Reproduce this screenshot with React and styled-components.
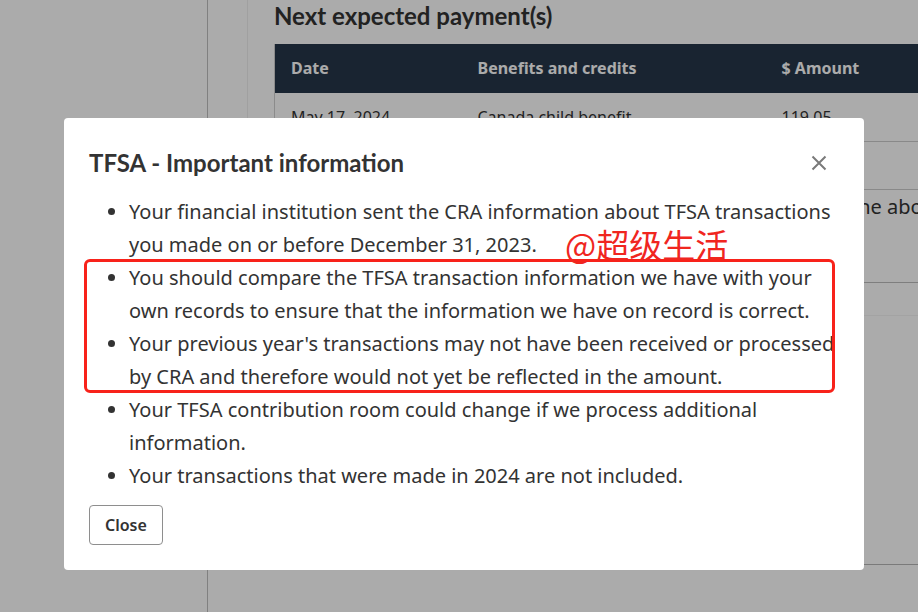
import React from "react";
import styled, { createGlobalStyle } from "styled-components";

const GlobalStyle = createGlobalStyle`
  html, body { margin: 0; padding: 0; }
  body {
    width: 918px;
    height: 612px;
    overflow: hidden;
    background: #ffffff;
    font-family: "Noto Sans", "Liberation Sans", sans-serif;
    color: #333333;
  }
  * { box-sizing: border-box; }
`;

const Page = styled.div`
  display: flex;
  height: 612px;
  width: 918px;
  overflow: hidden;
`;

const Sidebar = styled.aside`
  flex: 0 0 208px;
  border-right: 1px solid #bfbfbf;
`;

const Gutter = styled.div`
  flex: 0 0 39px;
`;

const Card = styled.main`
  flex: 0 0 auto;
  width: 760px;
  height: 565px;
  border-left: 1px solid #efefef;
  border-bottom: 1px solid #b6b6b6;
  padding: 2px 0 0 26px;
  overflow: hidden;
`;

const Heading = styled.h2`
  margin: 0;
  font-family: Lato, "Liberation Sans", sans-serif;
  font-weight: 700;
  font-size: 24px;
  line-height: 28px;
  color: #333333;
`;

const Table = styled.table`
  margin-top: 14px;
  width: 720px;
  border-collapse: collapse;
  font-size: 16px;
  border-left: 1px solid #cfcfcf;
`;

const HeadCell = styled.th`
  background: #26374a;
  color: #ffffff;
  font-weight: 700;
  text-align: left;
  height: 49px;
  padding: 0 16px 2px;
  width: ${(p) => p.$w || "auto"};
`;

const Cell = styled.td`
  height: 48px;
  padding: 0 16px;
  border-bottom: 1px solid #cdcdcd;
  color: #333333;
`;

const Note = styled.p`
  margin: 0;
  height: 93px;
  font-size: 20px;
  line-height: 33px;
  white-space: nowrap;
  border-bottom: 1px solid #bdbdbd;
  color: #333333;
`;

const NoteLead = styled.span`
  display: inline-block;
  width: 577px;
  overflow: hidden;
  vertical-align: top;
`;

const Strip = styled.div`
  height: 33px;
  border-bottom: 1px solid #f4f4f4;
`;

const Overlay = styled.div`
  position: fixed;
  inset: 0;
  background: rgba(0, 0, 0, 0.33);
  display: flex;
  align-items: flex-start;
  padding: 118px 0 0 64px;
`;

const Modal = styled.section`
  position: relative;
  width: 800px;
  background: #ffffff;
  border-radius: 4px;
  padding: 0 25px 25px;
`;

const ModalHeader = styled.header`
  display: flex;
  align-items: center;
  justify-content: space-between;
  padding-top: 30px;
`;

const ModalTitle = styled.h2`
  margin: 0;
  font-family: Lato, "Liberation Sans", sans-serif;
  font-weight: 700;
  font-size: 24px;
  line-height: 29px;
  color: #333333;
`;

const IconButton = styled.button`
  display: flex;
  align-items: center;
  justify-content: center;
  width: 24px;
  height: 24px;
  margin-right: 8px;
  padding: 0;
  border: 0;
  background: transparent;
  cursor: pointer;
`;

const List = styled.ul`
  margin: 18px 0 0;
  padding-left: 40px;
  font-size: 20px;
  line-height: 33px;
  color: #333333;
`;

const Item = styled.li``;

const Footer = styled.footer`
  display: flex;
  margin-top: 13px;
`;

const CloseButton = styled.button`
  height: 40px;
  padding: 0 15px;
  border: 1px solid #8e8e8e;
  border-radius: 4px;
  background: #ffffff;
  font-family: "Noto Sans", "Liberation Sans", sans-serif;
  font-weight: 600;
  font-size: 16px;
  color: #333333;
  cursor: pointer;
`;

const Highlight = styled.div`
  position: absolute;
  left: 20px;
  top: 141px;
  width: 751px;
  height: 134px;
  border: 3px solid #f8221a;
  border-radius: 6px;
  pointer-events: none;
`;

const Watermark = styled.span`
  position: absolute;
  left: 501px;
  top: 106px;
  font-family: "Noto Sans CJK SC", "Noto Sans", sans-serif;
  font-size: 33px;
  line-height: 40px;
  color: #f0261f;
  pointer-events: none;
`;

export default function App() {
  return (
    <>
      <GlobalStyle />
      <Page>
        <Sidebar />
        <Gutter />
        <Card>
          <Heading>Next expected payment(s)</Heading>
          <Table>
            <thead>
              <tr>
                <HeadCell $w="187px">Date</HeadCell>
                <HeadCell $w="304px">Benefits and credits</HeadCell>
                <HeadCell>$ Amount</HeadCell>
              </tr>
            </thead>
            <tbody>
              <tr>
                <Cell>May 17, 2024</Cell>
                <Cell>Canada child benefit</Cell>
                <Cell>119.05</Cell>
              </tr>
              <tr>
                <Cell>May 17, 2024</Cell>
                <Cell>Ontario child benefit</Cell>
                <Cell></Cell>
              </tr>
            </tbody>
          </Table>
          <Note>
            <NoteLead>Payments may differ if there are changes to</NoteLead>the above information.
          </Note>
          <Strip />
        </Card>
      </Page>
      <Overlay>
        <Modal role="dialog" aria-labelledby="tfsa-title">
          <ModalHeader>
            <ModalTitle id="tfsa-title">TFSA - Important information</ModalTitle>
            <IconButton aria-label="Close">
              <svg width="16" height="16" viewBox="0 0 16 16">
                <path d="M1.5 1.5 L14.5 14.5 M14.5 1.5 L1.5 14.5" stroke="#7a7a7a" strokeWidth="2" fill="none" />
              </svg>
            </IconButton>
          </ModalHeader>
          <List>
            <Item>
              Your financial institution sent the CRA information about TFSA transactions you made on or before December 31, 2023.
            </Item>
            <Item>
              You should compare the TFSA transaction information we have with your own records to ensure that the information we have on record is correct.
            </Item>
            <Item>
              Your previous year's transactions may not have been received or processed by CRA and therefore would not yet be reflected in the amount.
            </Item>
            <Item>
              Your TFSA contribution room could change if we process additional information.
            </Item>
            <Item>Your transactions that were made in 2024 are not included.</Item>
          </List>
          <Footer>
            <CloseButton>Close</CloseButton>
          </Footer>
          <Highlight />
          <Watermark>@超级生活</Watermark>
        </Modal>
      </Overlay>
    </>
  );
}
